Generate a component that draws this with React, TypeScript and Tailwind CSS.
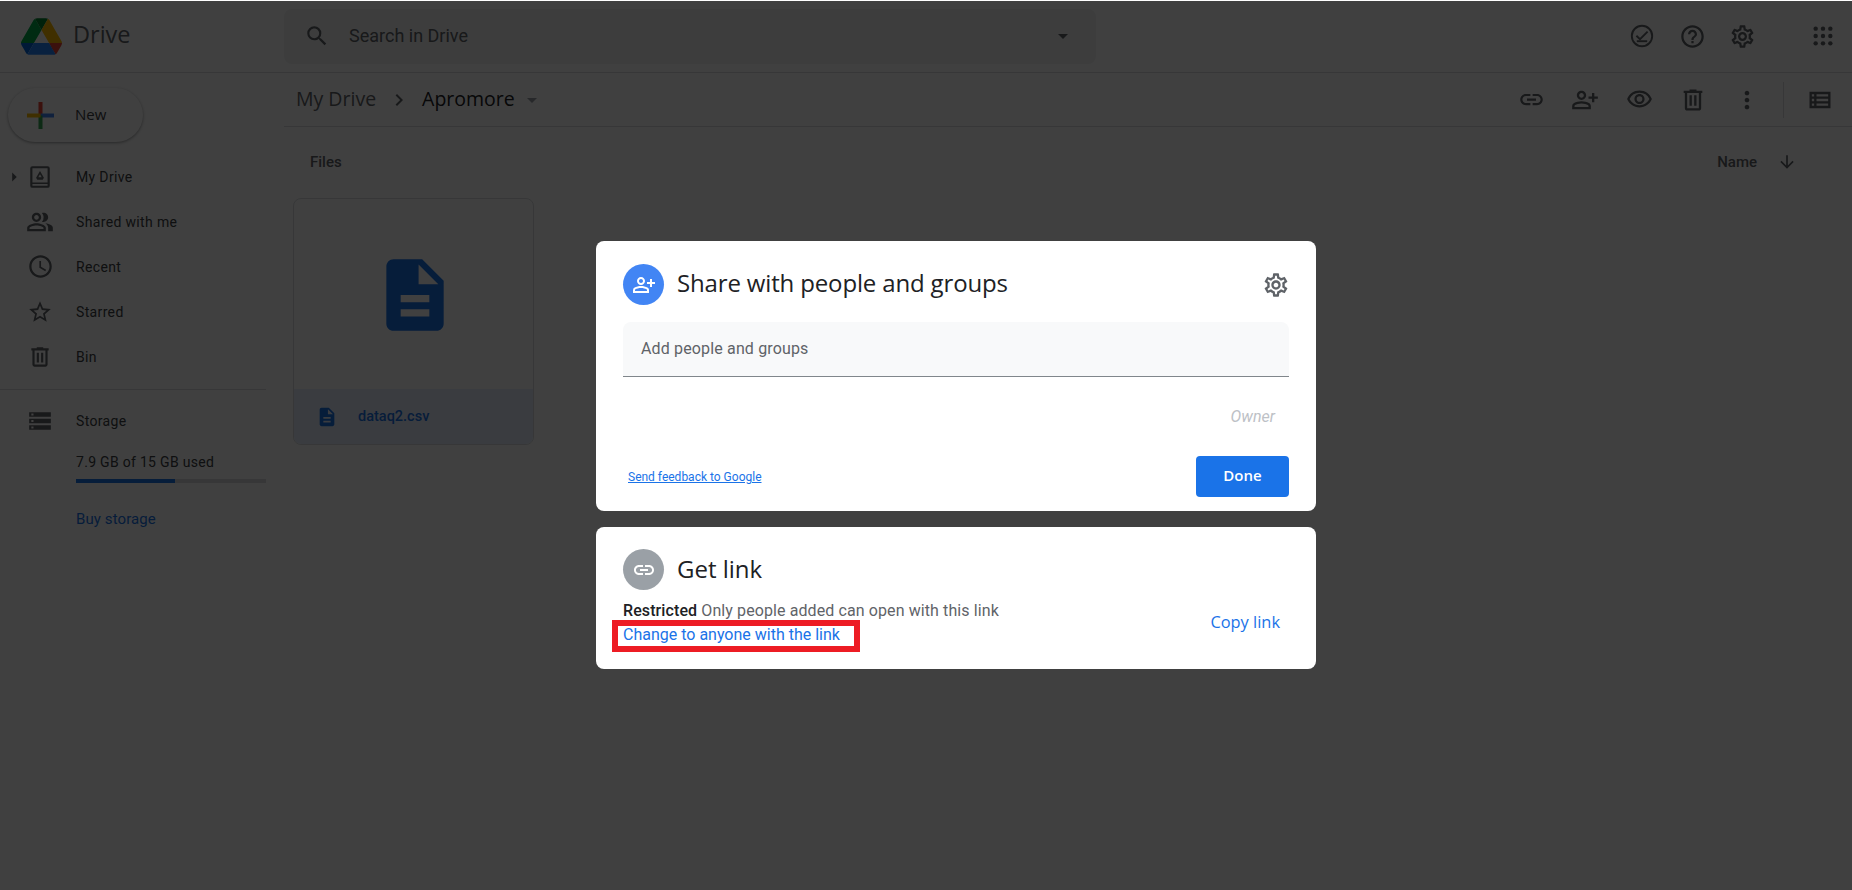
import {
  MdArrowDownward,
  MdArrowDropDown,
  MdArrowRight,
  MdChevronRight,
  MdHelpOutline,
  MdLink,
  MdMoreVert,
  MdOutlineAccessTime,
  MdOutlinePeopleAlt,
  MdOutlinePersonAddAlt,
  MdOutlineSettings,
  MdOutlineViewList,
  MdOutlineVisibility,
  MdSearch,
  MdStarBorder,
  MdStorage,
  MdDescription,
} from 'react-icons/md'
import type { ReactNode } from 'react'

const heading = { fontFamily: '"Open Sans", sans-serif' }

function DriveLogo() {
  return (
    <svg viewBox="0 0 87.3 78" className="w-[41px] h-[37px]">
      <path d="m6.6 66.85 3.85 6.65c.8 1.4 1.95 2.5 3.3 3.3l13.75-23.8h-27.5c0 1.55.4 3.1 1.2 4.5z" fill="#0066da" />
      <path d="m43.65 25-13.75-23.8c-1.35.8-2.5 1.9-3.3 3.3l-25.4 44a9.06 9.06 0 0 0 -1.2 4.5h27.5z" fill="#00ac47" />
      <path d="m73.55 76.8c1.35-.8 2.5-1.9 3.3-3.3l1.6-2.75 7.65-13.25c.8-1.4 1.2-2.95 1.2-4.5h-27.502l5.852 11.5z" fill="#ea4335" />
      <path d="m43.65 25 13.75-23.8c-1.35-.8-2.9-1.2-4.5-1.2h-18.5c-1.6 0-3.15.45-4.5 1.2z" fill="#00832d" />
      <path d="m59.8 53h-32.3l-13.75 23.8c1.35.8 2.9 1.2 4.5 1.2h50.8c1.6 0 3.15-.45 4.5-1.2z" fill="#2684fc" />
      <path d="m73.4 26.5-12.7-22c-.8-1.4-1.95-2.5-3.3-3.3l-13.75 23.8 16.15 28h27.45c0-1.55-.4-3.1-1.2-4.5z" fill="#ffba00" />
    </svg>
  )
}

function PlusLogo() {
  return (
    <svg viewBox="0 0 27 27" className="w-[27px] h-[27px]">
      <rect x="11.5" y="0" width="4" height="13.5" fill="#ea4335" />
      <rect x="13.5" y="11.5" width="13.5" height="4" fill="#4285f4" />
      <rect x="11.5" y="13.5" width="4" height="13.5" fill="#34a853" />
      <rect x="0" y="11.5" width="13.5" height="4" fill="#fbbc04" />
    </svg>
  )
}

function OfflineIcon() {
  return (
    <svg viewBox="0 0 24 24" className="w-6 h-6" fill="none" stroke="#5f6368" strokeWidth="1.9">
      <circle cx="12" cy="12" r="10.2" />
      <path d="M6.4 11.8l3.6 3.4 7.6-7.6" />
      <path d="M6.8 17.2h10.4" />
    </svg>
  )
}

function AppsIcon() {
  return (
    <svg viewBox="0 0 24 24" className="w-[22px] h-[22px]" fill="#5f6368">
      {[4, 12, 20].flatMap((y) =>
        [4, 12, 20].map((x) => <circle key={`${x}-${y}`} cx={x} cy={y} r="2.4" />),
      )}
    </svg>
  )
}

function MyDriveIcon() {
  return (
    <svg viewBox="0 0 24 24" className="w-[26px] h-[26px] shrink-0" fill="#5f6368">
      <path d="M19 2H5a2 2 0 0 0-2 2v16a2 2 0 0 0 2 2h14a2 2 0 0 0 2-2V4a2 2 0 0 0-2-2zM5 4h14v13H5V4zm0 16v-1.5h14V20H5z" />
      <path d="M12 6.5l-3.6 6.2 1.1 1.8h5l1.1-1.8L12 6.5zm0 3l1.6 2.8h-3.2L12 9.5z" />
    </svg>
  )
}

function TrashIcon({ size }: { size: number }) {
  return (
    <svg viewBox="0 0 24 24" width={size} height={size} className="shrink-0" fill="#5f6368">
      <path d="M15 4V3H9v1H4v2h1v13c0 1.1.9 2 2 2h10c1.1 0 2-.9 2-2V6h1V4h-5zm2 15H7V6h10v13zM9 8h2v9H9zm4 0h2v9h-2z" />
    </svg>
  )
}

function NavRow({ icon, label }: { icon: ReactNode; label: string }) {
  return (
    <div className="h-[45px] flex items-center pl-7">
      <span className="w-6 h-6 flex items-center justify-center text-[#5f6368]">{icon}</span>
      <span className="ml-6 text-sm tracking-[0.35px] text-[#3c4043]">{label}</span>
    </div>
  )
}

function ToolIcon({ children, className }: { children: ReactNode; className: string }) {
  return <span className={`flex items-center justify-center text-[#5f6368] ${className}`}>{children}</span>
}

function Sidebar() {
  return (
    <aside className="w-[284px] shrink-0 pt-[15px]">
      <button className="ml-2 w-[135px] h-[54px] rounded-full bg-white shadow-[0_1px_3px_rgba(60,64,67,0.5)] flex items-center pl-[19px]">
        <PlusLogo />
        <span className="ml-[21px] pb-[2px] text-[15px] font-medium text-[#3c4043]" style={heading}>New</span>
      </button>
      <div className="mt-3 w-[266px] relative">
        <MdArrowRight className="absolute left-[3px] top-[12px] text-[#5f6368]" size={22} />
        <NavRow icon={<MyDriveIcon />} label="My Drive" />
        <NavRow icon={<MdOutlinePeopleAlt size={28} className="shrink-0" />} label="Shared with me" />
        <NavRow icon={<MdOutlineAccessTime size={27} className="shrink-0" />} label="Recent" />
        <NavRow icon={<MdStarBorder size={26} className="shrink-0" />} label="Starred" />
        <NavRow icon={<TrashIcon size={26} />} label="Bin" />
        <div className="mt-[10px] border-t border-[#dadce0]" />
        <div className="mt-2">
          <NavRow icon={<MdStorage size={26} className="shrink-0" />} label="Storage" />
        </div>
        <div className="pl-[76px]">
          <p className="mt-[9px] text-sm leading-5 tracking-[0.3px] text-[#3c4043]">7.9 GB of 15 GB used</p>
          <div className="mt-[7px] h-1 bg-[#dadce0]">
            <div className="h-1 w-[99px] bg-[#1a73e8]" />
          </div>
          <p className="mt-[26px] text-[15px] leading-5 tracking-[0.1px] text-[#1a73e8]">Buy storage</p>
        </div>
      </div>
    </aside>
  )
}

function TopBar() {
  return (
    <header className="h-[73px] shrink-0 flex items-center border-b border-[#dadce0] relative">
      <div className="w-[284px] shrink-0 pl-[21px] flex items-center">
        <DriveLogo />
        <span className="ml-[11px] pb-[2px] text-[23.5px] text-[#5f6368]" style={heading}>Drive</span>
      </div>
      <div className="w-[812px] h-[55px] rounded-lg bg-[#f1f3f4] flex items-center pl-5 pr-[21px]">
        <MdSearch size={26} className="text-[#5f6368]" />
        <span className="ml-[19px] text-lg text-[#5f6368]">Search in Drive</span>
        <MdArrowDropDown size={24} className="ml-auto text-[#5f6368]" />
      </div>
      <div className="ml-auto flex items-center pr-[17px]">
        <ToolIcon className="w-[50px]"><OfflineIcon /></ToolIcon>
        <ToolIcon className="w-[50px]"><MdHelpOutline size={27} /></ToolIcon>
        <ToolIcon className="w-[50px] mr-[44px]"><MdOutlineSettings size={27} /></ToolIcon>
        <ToolIcon className="w-6"><AppsIcon /></ToolIcon>
      </div>
    </header>
  )
}

function Toolbar() {
  return (
    <div className="h-[54px] shrink-0 flex items-center border-b border-[#dadce0] pl-3">
      <span className="pb-[2px] text-[19.5px] text-[#5f6368]" style={heading}>My Drive</span>
      <MdChevronRight size={24} className="ml-[11px] text-[#5f6368]" />
      <span className="ml-[11px] pb-[2px] text-[19.5px] text-[#202124]" style={heading}>Apromore</span>
      <MdArrowDropDown size={24} className="ml-[5px] text-[#9aa0a6]" />
      <div className="ml-auto flex items-center pr-[18px]">
        <ToolIcon className="w-[54px]"><MdLink size={27} /></ToolIcon>
        <ToolIcon className="w-[54px]"><MdOutlinePersonAddAlt size={28} /></ToolIcon>
        <ToolIcon className="w-[54px]"><MdOutlineVisibility size={27} /></ToolIcon>
        <ToolIcon className="w-[54px]"><TrashIcon size={28} /></ToolIcon>
        <ToolIcon className="w-[54px]"><MdMoreVert size={28} /></ToolIcon>
        <div className="ml-[9px] h-9 border-l border-[#dadce0]" />
        <ToolIcon className="ml-[22px] w-7"><MdOutlineViewList size={28} /></ToolIcon>
      </div>
    </div>
  )
}

function FileCard() {
  return (
    <div className="ml-[9px] w-[241px] h-[247px] rounded-lg border border-[#dadce0] overflow-hidden flex flex-col">
      <div className="flex-1 flex items-center justify-center pl-[2px] pt-[2px]">
        <MdDescription size={86} className="text-[#1a73e8]" />
      </div>
      <div className="h-[55px] bg-[#e8f0fe] flex items-center pl-[22px]">
        <MdDescription size={22} className="text-[#1a73e8]" />
        <span className="ml-[20px] text-[14.5px] font-medium text-[#1a73e8]">dataq2.csv</span>
      </div>
    </div>
  )
}

function ShareDialog() {
  return (
    <div className="mt-[240px] ml-[596px] w-[720px] flex flex-col gap-4">
      <section className="h-[270px] rounded-lg bg-white pl-[27px] pr-[27px] pt-[23px]">
        <div className="flex items-center h-[41px]">
          <span className="w-[41px] h-[41px] rounded-full bg-[#4285f4] flex items-center justify-center text-white">
            <MdOutlinePersonAddAlt size={24} />
          </span>
          <h2 className="ml-[13px] pb-[3px] text-2xl tracking-[-0.15px] text-[#202124]" style={heading}>Share with people and groups</h2>
          <MdOutlineSettings size={28} className="ml-auto mr-[-1px] text-[#5f6368]" />
        </div>
        <div className="mt-[17px] h-[55px] rounded-t-lg bg-[#f8f9fa] border-b border-[#80868b] flex items-center pl-[18px] text-base tracking-[0.15px] text-[#5f6368]">
          Add people and groups
        </div>
        <p className="mt-[30px] pr-[14px] text-right text-base leading-5 italic text-[#bdc1c6]">Owner</p>
        <div className="mt-[29px] flex items-center">
          <a className="ml-[5px] text-xs text-[#1a73e8] underline">Send feedback to Google</a>
          <button className="ml-auto w-[93px] h-[41px] pb-[2px] rounded bg-[#1a73e8] text-[15px] font-semibold text-white" style={heading}>Done</button>
        </div>
      </section>
      <section className="h-[142px] rounded-lg bg-white pl-[27px] pr-[36px] pt-[22px] relative">
        <div className="flex items-center h-[41px]">
          <span className="w-[41px] h-[41px] rounded-full bg-[#9aa0a6] flex items-center justify-center text-white">
            <MdLink size={24} />
          </span>
          <h2 className="ml-[13px] pb-[2px] text-2xl text-[#202124]" style={heading}>Get link</h2>
        </div>
        <div className="flex items-start justify-between">
          <div className="mt-[9px] text-base leading-6 text-[#5f6368]">
            <p className="tracking-[0.1px]"><b className="font-medium text-[#202124]">Restricted</b> Only people added can open with this link</p>
            <p className="text-[#1a73e8]">Change to anyone with the link</p>
          </div>
          <span className="mt-5 text-[16.4px] font-medium text-[#1a73e8]" style={heading}>Copy link</span>
        </div>
        <div className="absolute left-4 top-[93px] w-[248px] h-8 border-[6px] border-[#ed1c24]" />
      </section>
    </div>
  )
}

export default function App() {
  return (
    <div className="relative w-[1852px] h-[890px] overflow-hidden bg-white" style={{ fontFamily: 'Roboto, sans-serif' }}>
      <div className="flex flex-col h-full">
        <TopBar />
        <div className="flex flex-1">
          <Sidebar />
          <main className="flex-1">
            <Toolbar />
            <div className="h-[71px] pb-px flex items-center justify-between pl-[26px] pr-[55px]">
              <span className="text-[15px] font-medium text-[#5f6368]">Files</span>
              <span className="flex items-center gap-5 text-[15px] font-medium text-[#5f6368]">
                Name
                <MdArrowDownward size={20} />
              </span>
            </div>
            <FileCard />
          </main>
        </div>
      </div>
      <div className="absolute inset-x-0 top-px bottom-0 bg-black/75">
        <ShareDialog />
      </div>
    </div>
  )
}
